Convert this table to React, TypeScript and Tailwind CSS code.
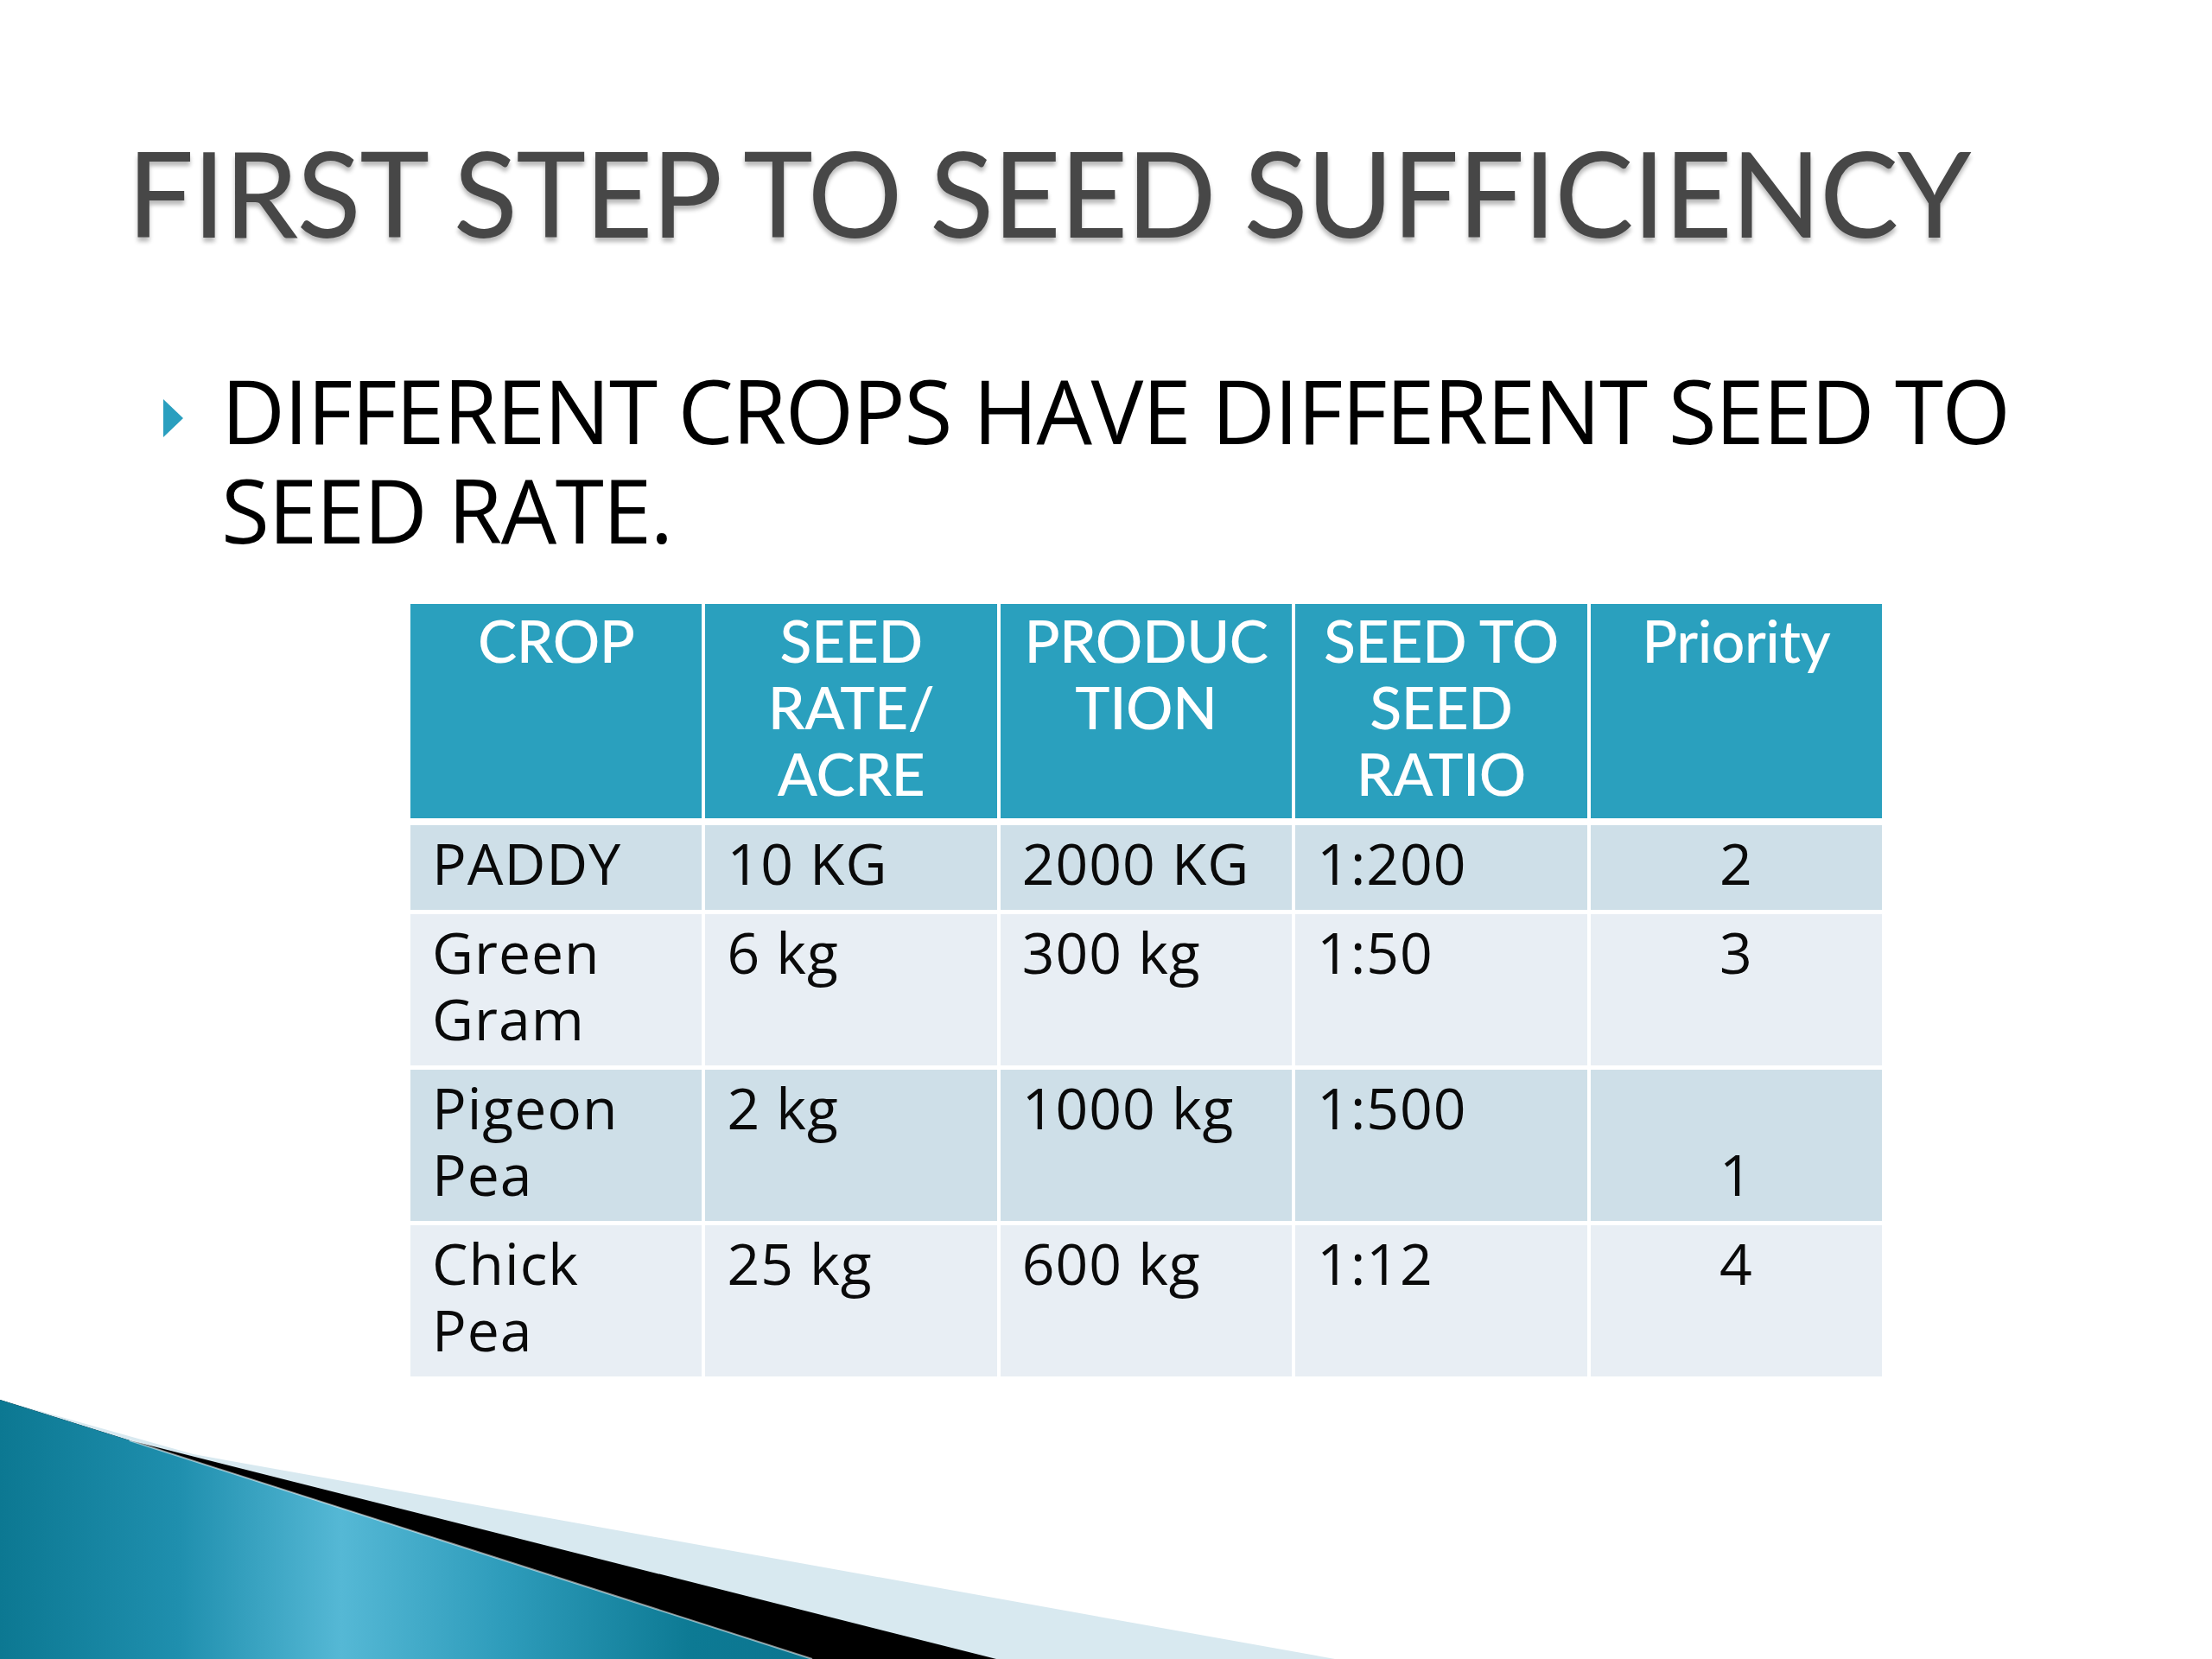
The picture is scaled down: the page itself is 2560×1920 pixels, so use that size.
import React from "react";

type Row = { bg: string; cells: string[][] };

const rows: Row[] = [
  { bg: "bg-[#cedfe8]", cells: [["PADDY"], ["10 KG"], ["2000 KG"], ["1:200"], ["2"]] },
  { bg: "bg-[#e8eef4]", cells: [["Green", "Gram"], ["6 kg"], ["300 kg"], ["1:50"], ["3"]] },
  { bg: "bg-[#cedfe8]", cells: [["Pigeon", "Pea"], ["2 kg"], ["1000 kg"], ["1:500"], ["\u00a0", "1"]] },
  { bg: "bg-[#e8eef4]", cells: [["Chick", "Pea"], ["25 kg"], ["600 kg"], ["1:12"], ["4"]] },
];

const headers: string[][] = [
  ["CROP"],
  ["SEED", "RATE/", "ACRE"],
  ["PRODUC", "TION"],
  ["SEED TO", "SEED", "RATIO"],
  ["Priority"],
];

export default function App() {
  return (
    <div className="relative w-[2560px] h-[1920px] bg-white overflow-hidden">
      <div className="flex flex-col pt-[154px] pl-[147px]">
        <h1 className="font-['Lato',sans-serif] text-[137px] leading-none font-normal tracking-[-1.7px] text-[#474747] whitespace-nowrap [text-shadow:0_5px_5px_rgba(0,0,0,0.28)]">
          FIRST STEP TO SEED SUFFICIENCY
        </h1>

        <div className="flex items-start mt-[126px] pl-[42px]">
          <svg width="23" height="44" viewBox="0 0 23 44" className="mt-[45px] shrink-0">
            <polygon points="0,0 23,22 0,44" fill="#2a9fbf" />
          </svg>
          <p className="ml-[44px] font-['Open_Sans',sans-serif] text-[102px] leading-[115px] tracking-[-1.5px] text-black whitespace-nowrap">
            DIFFERENT CROPS HAVE DIFFERENT SEED TO
            <br />
            SEED RATE.
          </p>
        </div>

        <div className="ml-[328px] mt-[52px] w-[1703px] flex flex-col">
          <div className="grid grid-cols-5 gap-x-[4px]">
            {headers.map((h, i) => (
              <div
                key={i}
                className="bg-[#2aa0be] h-[248px] pt-[3px] text-center text-white font-['Lato',sans-serif] font-medium tracking-[-0.5px] text-[68px] leading-[77px]"
              >
                {h.map((l, j) => (
                  <React.Fragment key={j}>
                    {j > 0 && <br />}
                    {l}
                  </React.Fragment>
                ))}
              </div>
            ))}
          </div>
          {rows.map((r, ri) => (
            <div key={ri} className={`grid grid-cols-5 gap-x-[4px] ${ri === 0 ? "mt-[8px]" : "mt-[5px]"}`}>
              {r.cells.map((c, ci) => (
                <div
                  key={ci}
                  className={`${r.bg} pt-[5px] pb-[16px] font-['Open_Sans',sans-serif] text-[66px] leading-[77px] tracking-[1px] text-[#0a0a0a] ${
                    ci === 4 ? "text-center" : "pl-[25px]"
                  }`}
                >
                  {c.map((l, j) => (
                    <React.Fragment key={j}>
                      {j > 0 && <br />}
                      {l}
                    </React.Fragment>
                  ))}
                </div>
              ))}
            </div>
          ))}
        </div>
      </div>

      <svg
        className="absolute left-0 bottom-0"
        width="1600"
        height="320"
        viewBox="0 0 1600 320"
      >
        <defs>
          <linearGradient id="tealg" x1="0" y1="0" x2="1" y2="0">
            <stop offset="0" stopColor="#0c7892" />
            <stop offset="0.22" stopColor="#1f8fae" />
            <stop offset="0.42" stopColor="#55b8d5" />
            <stop offset="0.62" stopColor="#2e9cbb" />
            <stop offset="0.85" stopColor="#0d7a94" />
            <stop offset="1" stopColor="#0b7590" />
          </linearGradient>
        </defs>
        <polygon points="0,20 224,83 1545,320 0,320" fill="#d8e9f0" />
        <polygon points="0,20 150,67 1153,320 0,320" fill="#000000" />
        <polygon points="0,20 150,67 940,320 0,320" fill="url(#tealg)" />
        <line x1="150" y1="67" x2="940" y2="320" stroke="rgba(255,255,255,0.55)" strokeWidth="2" />
      </svg>
    </div>
  );
}
